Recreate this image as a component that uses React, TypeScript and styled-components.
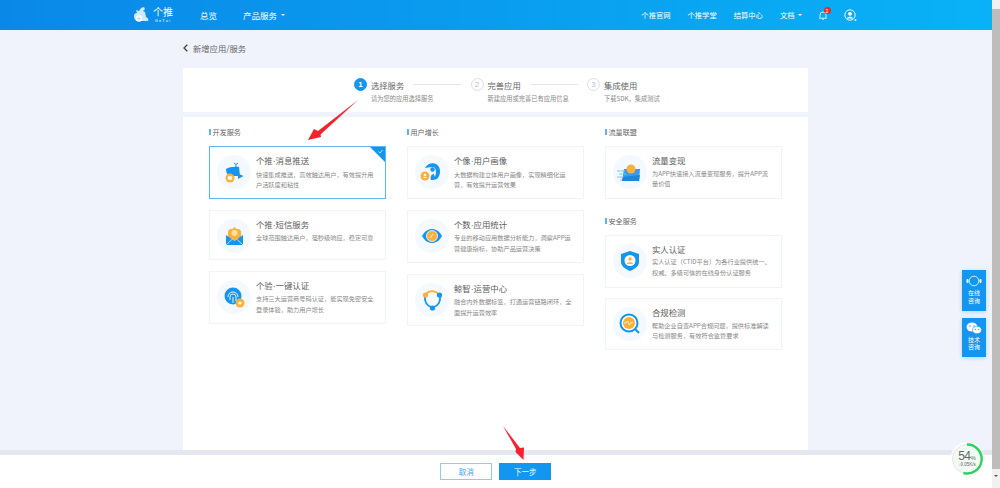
import React from 'react';
import styled, { createGlobalStyle } from 'styled-components';

const GlobalStyle = createGlobalStyle`
  html, body { margin: 0; padding: 0; height: 100%; overflow: hidden; }
  body { font-family: "Noto Sans CJK SC", "Liberation Sans", sans-serif; background: #f0f3fc; }
`;

const BLUE = '#1296f0';
const ORANGE = '#fbb03b';

const Shell = styled.div`
  display: flex;
  width: 1000px;
  height: 488px;
  overflow: hidden;
`;

const Viewport = styled.div`
  position: relative;
  flex: 1;
  display: flex;
  flex-direction: column;
  min-width: 0;
`;

const Header = styled.header`
  flex: none;
  height: 30px;
  display: flex;
  align-items: center;
  padding: 0 135px 0 133px;
  color: #fff;
  background: linear-gradient(90deg, #0a88e8, #09b2f6);
`;

const Logo = styled.div`
  display: flex;
  align-items: center;
  gap: 4px;
  width: 67px;
`;

const LogoText = styled.div`
  display: flex;
  flex-direction: column;
  align-items: center;
  line-height: 1;
  font-size: 10px;
`;

const LogoSub = styled.span`
  font-family: "Liberation Sans", sans-serif;
  font-size: 4px;
  letter-spacing: 1.2px;
  margin-top: 2px;
`;

const NavItem = styled.span<{ $right?: boolean }>`
  display: inline-flex;
  align-items: center;
  gap: ${(p) => (p.$right ? '3px' : '4px')};
  white-space: nowrap;
  font-size: ${(p) => (p.$right ? '7.3px' : '8.5px')};
`;

const MainNav = styled.nav`
  display: flex;
  gap: 26px;
`;

const RightNav = styled.nav`
  margin-left: auto;
  display: flex;
  align-items: center;
  gap: 17px;
`;

const Caret = styled.i`
  width: 0;
  height: 0;
  border: 2px solid transparent;
  border-top: 2.5px solid #fff;
  border-bottom: 0;
`;

const Bell = styled.span`
  position: relative;
  display: inline-flex;
`;

const Badge = styled.b`
  position: absolute;
  top: -4px;
  left: 5px;
  width: 7px;
  height: 7px;
  border-radius: 50%;
  background: #f5222d;
  font-size: 5px;
  font-weight: 400;
  line-height: 7px;
  text-align: center;
`;

const Content = styled.main`
  flex: 1;
  min-height: 0;
  display: flex;
  flex-direction: column;
  width: 625px;
  margin-left: 183px;
`;

const BackRow = styled.div`
  flex: none;
  box-sizing: border-box;
  height: 38px;
  padding-bottom: 2px;
  display: flex;
  align-items: center;
  gap: 5px;
  font-size: 8.3px;
  color: #666;
`;

const StepsPanel = styled.section`
  flex: none;
  height: 44px;
  box-sizing: border-box;
  padding: 10px 0 0 171px;
  display: flex;
  background: #fff;
`;

const Step = styled.div<{ $last?: boolean }>`
  flex: none;
  width: ${(p) => (p.$last ? '90px' : '116.5px')};
`;

const StepHead = styled.div`
  display: flex;
  align-items: center;
  height: 13px;
`;

const StepCircle = styled.span<{ $active?: boolean }>`
  flex: none;
  box-sizing: border-box;
  width: 13px;
  height: 13px;
  margin-right: 4px;
  border-radius: 50%;
  font-size: 8px;
  line-height: 11px;
  text-align: center;
  font-family: "Liberation Sans", sans-serif;
  font-weight: ${(p) => (p.$active ? 700 : 400)};
  color: ${(p) => (p.$active ? '#fff' : '#b8bfd2')};
  border: 1px solid ${(p) => (p.$active ? BLUE : '#dcdfe8')};
  background: ${(p) => (p.$active ? BLUE : '#fff')};
`;

const StepTitle = styled.span`
  flex: none;
  font-size: 8.3px;
  color: #666;
`;

const StepLine = styled.i`
  flex: 1;
  height: 1px;
  margin: 0 9px;
  background: #e6e8ef;
`;

const StepSub = styled.div`
  margin: 3px 0 0 17px;
  font-size: 6.25px;
  line-height: 9px;
  white-space: nowrap;
  color: #888;
`;

const ServicePanel = styled.section`
  flex: 1;
  min-height: 0;
  margin-top: 5px;
  padding: 10px 26px 0;
  display: grid;
  grid-template-columns: repeat(3, 177px);
  column-gap: 21px;
  align-content: start;
  background: #fff;
`;

const Column = styled.div`
  display: flex;
  flex-direction: column;
`;

const GroupTitle = styled.h3<{ $spaced?: boolean }>`
  margin: ${(p) => (p.$spaced ? '7px 0 9px' : '0 0 10px')};
  height: 9px;
  display: flex;
  align-items: center;
  gap: 2px;
  font-size: 7.1px;
  font-weight: 400;
  color: #666;
  &::before {
    content: '';
    width: 1.5px;
    height: 6px;
    background: #5cb6f5;
  }
`;

const Card = styled.article<{ $h: number; $selected?: boolean }>`
  position: relative;
  box-sizing: border-box;
  height: ${(p) => p.$h}px;
  margin-bottom: 10.5px;
  padding: 8px 4px 0 7px;
  display: flex;
  gap: 5px;
  overflow: hidden;
  background: #fff;
  border: 1px solid ${(p) => (p.$selected ? '#5fb8f6' : '#f1f3fa')};
`;

const IconCircle = styled.span`
  flex: none;
  width: 34px;
  height: 34px;
  border-radius: 50%;
  background: #f3f9ff;
`;

const CardBody = styled.div`
  min-width: 0;
`;

const CardTitle = styled.div`
  font-size: 8.4px;
  line-height: 11px;
  color: #5c5c5c;
  white-space: nowrap;
`;

const TitleDot = styled.span`
  font-family: "Liberation Sans", sans-serif;
`;

const CardDesc = styled.p`
  margin: 2.5px 0 0;
  font-size: 6.2px;
  line-height: 10.5px;
  color: #888;
  white-space: pre-line;
`;

const CornerMark = styled.svg`
  position: absolute;
  top: 0;
  right: 0;
`;

const Footer = styled.footer`
  flex: none;
  height: 38px;
  box-sizing: border-box;
  padding-top: 8px;
  border-top: 5px solid #e4e7f0;
  display: flex;
  justify-content: center;
  align-items: flex-start;
  gap: 7px;
  background: #fff;
`;

const Button = styled.button<{ $primary?: boolean }>`
  width: 52px;
  height: 17px;
  padding: 0;
  font-family: inherit;
  font-size: 7.5px;
  border: 1px solid ${(p) => (p.$primary ? BLUE : '#8ccbf7')};
  color: ${(p) => (p.$primary ? '#fff' : '#3ba4ee')};
  background: ${(p) => (p.$primary ? BLUE : '#fff')};
`;

const FloatBar = styled.aside`
  position: absolute;
  top: 270px;
  left: 962px;
  display: flex;
  flex-direction: column;
  gap: 6.5px;
`;

const FloatButton = styled.div<{ $h: number }>`
  box-sizing: border-box;
  width: 24px;
  height: ${(p) => p.$h}px;
  padding-top: 4px;
  display: flex;
  flex-direction: column;
  align-items: center;
  gap: 1px;
  font-size: 6px;
  line-height: 7.5px;
  text-align: center;
  color: #fff;
  background: ${BLUE};
  box-shadow: 0 1px 4px rgba(18, 150, 240, 0.3);
`;

const Speed = styled.div`
  position: absolute;
  top: 442px;
  left: 950px;
  width: 34px;
  height: 34px;
`;

const SpeedText = styled.div`
  position: absolute;
  inset: 0;
  display: flex;
  flex-direction: column;
  align-items: center;
  justify-content: center;
  font-family: "Liberation Sans", sans-serif;
  color: #666;
  line-height: 1;
`;

const SpeedValue = styled.span`
  font-size: 12px;
  letter-spacing: -0.5px;
  & small { font-size: 6px; letter-spacing: 0; }
`;

const SpeedRate = styled.span`
  margin-top: 1px;
  font-size: 4.5px;
  white-space: nowrap;
  &::before { content: '↓'; color: #4aa8f0; }
`;

const Overlay = styled.svg`
  position: absolute;
  top: 0;
  left: 0;
  pointer-events: none;
`;

const Scrollbar = styled.div`
  flex: none;
  width: 8.5px;
  display: flex;
  flex-direction: column;
  background: #f1f1f1;
`;

const ScrollThumb = styled.div`
  height: 460px;
  margin-top: 9px;
  background: #bdbdbd;
`;

const ScrollArrow = styled.div`
  margin: 6px auto 0;
  width: 0;
  height: 0;
  border: 2px solid transparent;
  border-top: 2.5px solid #555;
  border-bottom: 0;
`;

const Pic = ({ children }: { children: React.ReactNode }) => (
  <svg width="34" height="34" viewBox="0 0 34 34">{children}</svg>
);

const icons: Record<string, React.ReactNode> = {
  push: (
    <Pic>
      <path d="M9 14c3-2 8-2.500 13-2l1 9H12c-2-2-3-4-3-7z" fill={BLUE} />
      <path d="M19 12V9.500M19 9.500l-2-1.500M19 9.500l2-1.500" stroke={BLUE} strokeWidth="1" fill="none" />
      <path d="M21 18.500l5.500 2.500-5.500 3z" fill={BLUE} />
      <circle cx="13" cy="23" r="4.500" fill={ORANGE} />
      <rect x="10.800" y="21.300" width="4.400" height="3.400" rx=".6" fill="#fff" />
    </Pic>
  ),
  sms: (
    <Pic>
      <path d="M11 18V12l2-2h2.500L17.500 8l2 2H22l2 2v6l-6.500 4z" fill={ORANGE} />
      <circle cx="17.500" cy="14" r="3" fill="#ffdf9e" />
      <path d="M9 16l8.500 6 8.500-6v10H9z" fill={BLUE} />
      <path d="M9 26l6.500-6M26 26l-6.500-6" stroke="#fff" strokeWidth=".7" />
    </Pic>
  ),
  auth: (
    <Pic>
      <circle cx="16" cy="16" r="8.500" fill={BLUE} />
      <path d="M11 17a5 5 0 0 1 10 0M13 20v-3a3 3 0 0 1 6 0v4M16 17v6" fill="none" stroke="#fff" strokeWidth=".9" />
      <circle cx="23" cy="23" r="4.500" fill={ORANGE} />
      <circle cx="23" cy="23" r="1.600" fill="#fff" />
    </Pic>
  ),
  profile: (
    <Pic>
      <path d="M10 13c2-4 7-6 11-4 4 2 5 8 3 12-1 3-4 4-7 4l1-3c2 0 3-2 3-5 0-3-1-5-4-5-3 0-5 1-7 1z" fill={BLUE} />
      <circle cx="17.500" cy="14.500" r="2.200" fill={BLUE} />
      <path d="M16 25c-1-3 0-6 3-6 1 2 0 5-1 6z" fill={BLUE} />
      <circle cx="10" cy="21" r="4.500" fill={ORANGE} />
      <circle cx="10" cy="20" r="1.300" fill="#fff" />
      <path d="M8 23c1-1.500 3-1.500 4 0z" fill="#fff" />
    </Pic>
  ),
  stats: (
    <Pic>
      <path d="M7 17c3-5 6-7 10-7s7 2 10 7c-3 5-6 7-10 7s-7-2-10-7z" fill={BLUE} />
      <circle cx="17" cy="17" r="5.500" fill={ORANGE} stroke="#fff" strokeWidth=".8" />
      <path d="M15 19l3-4" stroke="#fff" strokeWidth=".8" />
    </Pic>
  ),
  ops: (
    <Pic>
      <path d="M11 11a8 8 0 0 1 13 1" fill="none" stroke={ORANGE} strokeWidth="1.800" />
      <path d="M10 14a9 9 0 0 0 6 10M19 24a9 9 0 0 0 6-10" fill="none" stroke={BLUE} strokeWidth="1.800" />
      <circle cx="10.500" cy="12" r="2.600" fill={ORANGE} />
      <circle cx="24.500" cy="12" r="2.600" fill={BLUE} />
      <circle cx="17.500" cy="25" r="2.600" fill={BLUE} />
    </Pic>
  ),
  money: (
    <Pic>
      <path d="M11 14h16l-1 12H9z" fill="#2f9ff0" />
      <path d="M4 16h8M6 19h7M4 22h7M7 25h5" stroke="#7cc5f7" strokeWidth="1" />
      <path d="M10 22l17-2-1 6H9z" fill="#1a86dc" />
      <circle cx="18" cy="14" r="4.500" fill={ORANGE} />
    </Pic>
  ),
  shield: (
    <Pic>
      <path d="M17 7l9 3v8c0 4-4 7-9 9-5-2-9-5-9-9v-8z" fill={BLUE} />
      <circle cx="17" cy="16.500" r="5.500" fill="#fff" />
      <circle cx="17" cy="15" r="1.700" fill={ORANGE} />
      <path d="M13.800 20c.5-2.500 5.900-2.500 6.400 0z" fill={ORANGE} />
    </Pic>
  ),
  check: (
    <Pic>
      <circle cx="16" cy="16" r="8.500" fill="#fff" stroke={BLUE} strokeWidth="2" />
      <circle cx="16" cy="16" r="6" fill={ORANGE} />
      <path d="M11 16h2l1.500-2 2 4 1.500-2.500h2" fill="none" stroke="#fff" strokeWidth=".8" />
      <path d="M22 22l4 4" stroke={BLUE} strokeWidth="2.200" />
    </Pic>
  ),
};

type Service = { icon: string; title: string; desc: string; h: number; selected?: boolean };
type Group = { title: string; items: Service[] };

const columns: Group[][] = [
  [
    {
      title: '开发服务',
      items: [
        { icon: 'push', title: '个推·消息推送', desc: '快速集成推送，高效触达用户，有效提升用\n户活跃度和粘性', h: 53, selected: true },
        { icon: 'sms', title: '个推·短信服务', desc: '全球范围触达用户，毫秒级响应，稳定可靠', h: 50.5 },
        { icon: 'auth', title: '个验·一键认证', desc: '支持三大运营商号码认证，能实现免密安全\n登录体验，助力用户增长', h: 53 },
      ],
    },
  ],
  [
    {
      title: '用户增长',
      items: [
        { icon: 'profile', title: '个像·用户画像', desc: '大数据构建立体用户画像，实现精细化运\n营，有效提升运营效果', h: 53 },
        { icon: 'stats', title: '个数·应用统计', desc: '专业的移动应用数据分析能力，洞察APP运\n营健康指标，协助产品运营决策', h: 53.5 },
        { icon: 'ops', title: '鲸智·运营中心', desc: '融合内外数据标签，打通运营链路闭环，全\n面提升运营效率', h: 52 },
      ],
    },
  ],
  [
    {
      title: '流量联盟',
      items: [
        { icon: 'money', title: '流量变现', desc: '为APP快速接入流量变现服务，提升APP流\n量价值', h: 53 },
      ],
    },
    {
      title: '安全服务',
      items: [
        { icon: 'shield', title: '实人认证', desc: '实人认证（CTID平台）为各行业提供统一、\n权威、多级可信的在线身份认证服务', h: 53 },
        { icon: 'check', title: '合规检测', desc: '帮助企业自查APP合规问题，提供标准解读\n与检测服务，有效符合监管要求', h: 52 },
      ],
    },
  ],
];

const steps = [
  { title: '选择服务', sub: '请为您的应用选择服务' },
  { title: '完善应用', sub: '新建应用或完善已有应用信息' },
  { title: '集成使用', sub: '下载SDK，集成测试' },
];

const renderTitle = (title: string) => {
  const [brand, name] = title.split('·');
  if (!name) return title;
  return (
    <>
      {brand}
      <TitleDot>·</TitleDot>
      {name}
    </>
  );
};

export default function App() {
  return (
    <>
      <GlobalStyle />
      <Shell>
        <Viewport>
          <Header>
            <Logo>
              <svg width="16" height="18" viewBox="0 0 16 18">
                <path d="M1 10c0-2 1-3 3-3l-1-3 3 1 2-3 3-1 1 2-2 2 2 1 1 5c2 1 3 2 2 4H5c-3 0-4-3-4-5z" fill="#cfe9fc" />
                <circle cx="6" cy="12.500" r="3.200" fill="#fff" />
                <path d="M4 12.500h4M6 10.500v4" stroke="#8cc8f4" strokeWidth=".6" />
              </svg>
              <LogoText>
                个推
                <LogoSub>GeTui</LogoSub>
              </LogoText>
            </Logo>
            <MainNav>
              <NavItem>总览</NavItem>
              <NavItem>产品服务<Caret /></NavItem>
            </MainNav>
            <RightNav>
              <NavItem $right>个推官网</NavItem>
              <NavItem $right>个推学堂</NavItem>
              <NavItem $right>结算中心</NavItem>
              <NavItem $right>文档<Caret /></NavItem>
              <Bell>
                <svg width="8" height="9" viewBox="0 0 8 9">
                  <path d="M1 6.500V4a3 3 0 0 1 6 0v2.500l.7.7H.3zM3 8.200h2" fill="none" stroke="#fff" strokeWidth=".8" />
                </svg>
                <Badge>2</Badge>
              </Bell>
              <svg width="13" height="13" viewBox="0 0 13 13">
                <circle cx="6" cy="6" r="5.200" fill="none" stroke="#fff" strokeWidth=".9" />
                <circle cx="6" cy="4.800" r="1.900" fill="#fff" />
                <path d="M2.800 9.500c.6-2.500 5.800-2.500 6.400 0z" fill="#fff" />
                <circle cx="11.500" cy="11" r=".9" fill="#fff" />
              </svg>
            </RightNav>
          </Header>

          <Content>
            <BackRow>
              <svg width="5" height="8" viewBox="0 0 5 8">
                <path d="M4.300.7L1 4l3.300 3.300" fill="none" stroke="#444" strokeWidth="1.300" />
              </svg>
              新增应用/服务
            </BackRow>
            <StepsPanel>
              {steps.map((s, i) => (
                <Step key={s.title} $last={i === steps.length - 1}>
                  <StepHead>
                    <StepCircle $active={i === 0}>{i + 1}</StepCircle>
                    <StepTitle>{s.title}</StepTitle>
                    {i < steps.length - 1 && <StepLine />}
                  </StepHead>
                  <StepSub>{s.sub}</StepSub>
                </Step>
              ))}
            </StepsPanel>
            <ServicePanel>
              {columns.map((groups, c) => (
                <Column key={c}>
                  {groups.map((g, gi) => (
                    <React.Fragment key={g.title}>
                      <GroupTitle $spaced={gi > 0}>{g.title}</GroupTitle>
                      {g.items.map((item) => (
                        <Card key={item.title} $h={item.h} $selected={item.selected}>
                          <IconCircle>{icons[item.icon]}</IconCircle>
                          <CardBody>
                            <CardTitle>{renderTitle(item.title)}</CardTitle>
                            <CardDesc>{item.desc}</CardDesc>
                          </CardBody>
                          {item.selected && (
                            <CornerMark width="15" height="15" viewBox="0 0 15 15">
                              <path d="M0 0h15v15z" fill={BLUE} />
                              <path d="M8.500 4.500l1.500 1.500 2.500-3" fill="none" stroke="#fff" strokeWidth=".7" />
                            </CornerMark>
                          )}
                        </Card>
                      ))}
                    </React.Fragment>
                  ))}
                </Column>
              ))}
            </ServicePanel>
          </Content>

          <Footer>
            <Button>取消</Button>
            <Button $primary>下一步</Button>
          </Footer>

          <FloatBar>
            <FloatButton $h={41}>
              <svg width="16" height="14" viewBox="0 0 16 14">
                <circle cx="8" cy="7" r="4.800" fill="none" stroke="#fff" strokeWidth=".8" />
                <rect x="0.500" y="5" width="2" height="4" rx="1" fill="#fff" />
                <rect x="13.500" y="5" width="2" height="4" rx="1" fill="#fff" />
              </svg>
              <span>在线<br />咨询</span>
            </FloatButton>
            <FloatButton $h={39.500}>
              <svg width="16" height="13" viewBox="0 0 16 13">
                <ellipse cx="6" cy="5" rx="5.500" ry="4.500" fill="#fff" />
                <ellipse cx="11" cy="8" rx="4.500" ry="3.800" fill="#fff" stroke={BLUE} strokeWidth=".6" />
                <circle cx="4" cy="4" r=".7" fill={BLUE} />
                <circle cx="8" cy="4" r=".7" fill={BLUE} />
                <circle cx="9.500" cy="7.500" r=".6" fill={BLUE} />
                <circle cx="12.500" cy="7.500" r=".6" fill={BLUE} />
              </svg>
              <span>技术<br />咨询</span>
            </FloatButton>
          </FloatBar>

          <Speed>
            <svg width="34" height="34" viewBox="0 0 34 34">
              <circle cx="17" cy="17" r="16.500" fill="#fff" />
              <circle cx="17" cy="17" r="14.500" fill="#f1fbf3" stroke="#e2e6e4" strokeWidth="1" />
              <path d="M17 2.500a14.500 14.500 0 1 1-3.600 28.500" fill="none" stroke="#2fd05c" strokeWidth="2.400" />
            </svg>
            <SpeedText>
              <SpeedValue>54<small>%</small></SpeedValue>
              <SpeedRate>0.05K/s</SpeedRate>
            </SpeedText>
          </Speed>

          <Overlay width="991" height="488" viewBox="0 0 991 488">
            <path d="M358 100L318 131l-4-2-6 11 13-3-.5-2.500z" fill="#f5222d" />
            <path d="M503 426l13 23-.5 3 8 8 .5-12.500-4 .5z" fill="#f5222d" />
          </Overlay>
        </Viewport>
        <Scrollbar>
          <ScrollThumb />
          <ScrollArrow />
        </Scrollbar>
      </Shell>
    </>
  );
}
